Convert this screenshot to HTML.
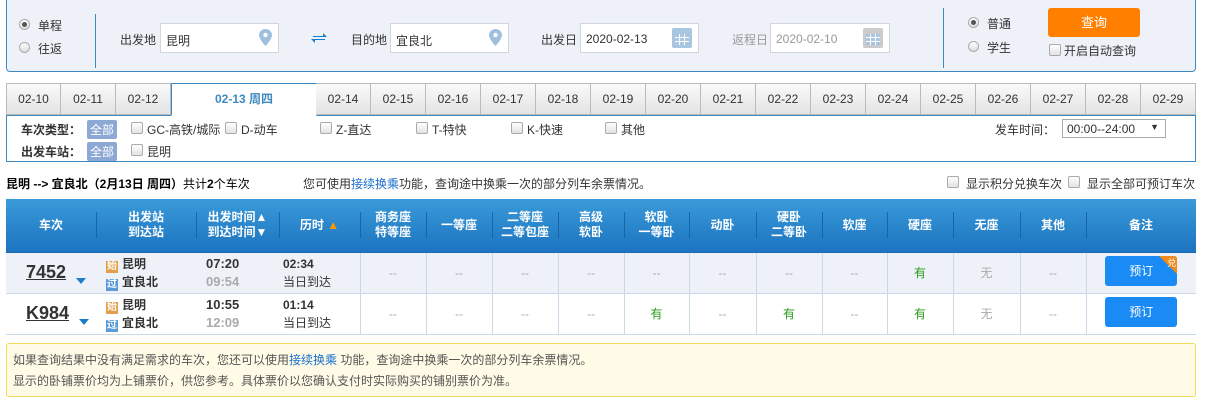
<!DOCTYPE html><html><head><meta charset="utf-8"><style>
*{box-sizing:border-box;margin:0;padding:0}
body{width:1206px;height:403px;overflow:hidden;background:#fff;font-family:"Liberation Sans","Noto Sans CJK SC",sans-serif;font-size:12px;color:#333;position:relative}
.a{position:absolute;white-space:nowrap}
.top{position:absolute;left:6px;top:-6px;width:1190px;height:78px;background:#eef1f8;border:1px solid #3e8ac0;border-radius:4px}
.radio{position:absolute;width:11px;height:11px;border-radius:50%;border:1px solid #aaa;background:linear-gradient(#fff,#ddd)}
.radio.on::after{content:"";position:absolute;left:2px;top:2px;width:5px;height:5px;border-radius:50%;background:#555}
.inp{position:absolute;height:30px;background:#fff;border:1px solid #cfd6e0;font-size:12px;padding:8px 0 0 5px}
.pin{position:absolute;right:6px;top:5px;width:13px;height:17px}
.cal{position:absolute;right:6px;top:4px;width:20px;height:20px;background:#a9c6e0;border-radius:2px}
.cal::after{content:"";position:absolute;left:3px;top:6px;width:14px;height:11px;background:repeating-linear-gradient(90deg,transparent 0 4px,#fff 4px 5px),repeating-linear-gradient(0deg,#a9c6e0 0 3px,#fff 3px 4px)}
.cb{position:absolute;width:12px;height:12px;border:1px solid #aaa;border-radius:2px;background:linear-gradient(#fff,#e2e2e2)}
.tabs{position:absolute;left:6px;top:83px;width:1190px;height:33px;border-bottom:1px solid #3e8ac0}
.tab{position:absolute;top:0;width:55px;height:32px;border:1px solid #bbb;border-left:none;background:linear-gradient(#fafafa,#e3e3e3);text-align:center;line-height:31px;font-size:12px;color:#333}
.tab.sel{background:#fff;border:1px solid #3e8ac0;border-bottom:1px solid #fff;height:33px;color:#3e8ac0;font-weight:bold}
.filter{position:absolute;left:6px;top:115px;width:1190px;height:47px;border:1px solid #3e8ac0;border-top:none}
.badge{position:absolute;background:#8ea8d5;color:#fff;padding:1px 3px;font-size:12px;border-radius:2px}
b{font-weight:bold}
table{position:absolute;left:6px;top:199px;width:1190px;border-collapse:collapse;table-layout:fixed}
th{height:53px;background:linear-gradient(#3a9ad9,#1c74c0);color:#fff;font-size:12px;font-weight:bold;line-height:15px;border-bottom:1px solid #1a6bb0;position:relative}
th+th::before{content:"";position:absolute;left:0;top:13px;height:26px;border-left:1px solid #1965a8}
td{text-align:center;border-right:1px solid #c9d9e6;color:#aaa;font-size:12px;height:41px;border-bottom:1px solid #c9d9e6}
td.n{border-right:none}
tr.r1 td{background:#eef1f8}
.g{color:#2a9a1a}
.num{font-size:18px;font-weight:bold;color:#333;text-decoration:underline}
.tri{display:inline-block;border-left:5px solid transparent;border-right:5px solid transparent;border-top:6px solid #1a7ed0;margin-left:10px;vertical-align:-6px}
.ic{display:inline-block;width:12px;height:12px;color:#fff;font-size:10px;line-height:12px;text-align:center;margin-right:4px;vertical-align:-1px}
.btn{display:inline-block;width:72px;height:30px;background:#1a8af5;color:#fff;border-radius:3px;line-height:30px;position:relative;overflow:hidden}
.note{position:absolute;left:6px;top:343px;width:1190px;height:54px;background:#fffbe6;border:1px solid #f0dc5a;border-radius:3px;padding:6px 0 0 6px;line-height:21px;color:#555}
a{color:#1a6fcd;text-decoration:none}
</style></head><body>
<div class="top"></div>
<div class="radio on" style="left:19px;top:19px"></div><div class="a" style="left:38px;top:17px">单程</div>
<div class="radio" style="left:19px;top:42px"></div><div class="a" style="left:38px;top:40px">往返</div>
<div class="a" style="left:95px;top:14px;height:54px;border-left:1px solid #3e8ac0"></div>
<div class="a" style="left:120px;top:31px">出发地</div>
<div class="inp" style="left:160px;top:23px;width:119px">昆明<svg class="pin" viewBox="0 0 13 17"><path d="M6.5 0C3 0 0 2.7 0 6.2 0 10 6.5 17 6.5 17S13 10 13 6.2C13 2.7 10 0 6.5 0z" fill="#9ec0de"/><circle cx="6.5" cy="6" r="2.2" fill="#fff"/></svg></div>
<svg class="a" style="left:311px;top:31px" width="16" height="14" viewBox="0 0 16 14"><path d="M2 5h10V2l4 4H2zM14 9H4v3L0 8h14z" fill="#1a7ed0"/></svg>
<div class="a" style="left:351px;top:31px">目的地</div>
<div class="inp" style="left:390px;top:23px;width:119px">宜良北<svg class="pin" viewBox="0 0 13 17"><path d="M6.5 0C3 0 0 2.7 0 6.2 0 10 6.5 17 6.5 17S13 10 13 6.2C13 2.7 10 0 6.5 0z" fill="#9ec0de"/><circle cx="6.5" cy="6" r="2.2" fill="#fff"/></svg></div>
<div class="a" style="left:541px;top:31px">出发日</div>
<div class="inp" style="left:580px;top:23px;width:119px">2020-02-13<div class="cal"></div></div>
<div class="a" style="left:732px;top:31px;color:#999">返程日</div>
<div class="inp" style="left:770px;top:23px;width:120px;color:#999">2020-02-10<div class="cal" style="background:#ccc"></div></div>
<div class="a" style="left:943px;top:8px;height:60px;border-left:1px solid #3e8ac0"></div>
<div class="radio on" style="left:968px;top:17px"></div><div class="a" style="left:987px;top:15px">普通</div>
<div class="radio" style="left:968px;top:41px"></div><div class="a" style="left:987px;top:39px">学生</div>
<div class="a" style="left:1048px;top:8px;width:92px;height:29px;background:#ff8000;border-radius:3px;color:#fff;text-align:center;line-height:29px;font-size:13px">查询</div>
<div class="cb" style="left:1049px;top:44px"></div><div class="a" style="left:1064px;top:42px">开启自动查询</div>

<div class="tabs">
<div class="tab" style="left:0;border-left:1px solid #bbb">02-10</div>
<div class="tab" style="left:55px">02-11</div>
<div class="tab" style="left:110px">02-12</div>
<div class="tab sel" style="left:165px;width:146px">02-13 周四</div>
<div class="tab" style="left:310px">02-14</div><div class="tab" style="left:365px">02-15</div><div class="tab" style="left:420px">02-16</div><div class="tab" style="left:475px">02-17</div><div class="tab" style="left:530px">02-18</div><div class="tab" style="left:585px">02-19</div><div class="tab" style="left:640px">02-20</div><div class="tab" style="left:695px">02-21</div><div class="tab" style="left:750px">02-22</div><div class="tab" style="left:805px">02-23</div><div class="tab" style="left:860px">02-24</div><div class="tab" style="left:915px">02-25</div><div class="tab" style="left:970px">02-26</div><div class="tab" style="left:1025px">02-27</div><div class="tab" style="left:1080px">02-28</div><div class="tab" style="left:1135px;width:55px">02-29</div>
</div>
<div class="filter"></div>
<div class="a" style="left:21px;top:121px;font-weight:bold">车次类型：</div>
<div class="badge" style="left:87px;top:120px">全部</div>
<div class="cb" style="left:131px;top:122px"></div><div class="a" style="left:147px;top:121px">GC-高铁/城际</div>
<div class="cb" style="left:225px;top:122px"></div><div class="a" style="left:241px;top:121px">D-动车</div>
<div class="cb" style="left:320px;top:122px"></div><div class="a" style="left:336px;top:121px">Z-直达</div>
<div class="cb" style="left:416px;top:122px"></div><div class="a" style="left:432px;top:121px">T-特快</div>
<div class="cb" style="left:511px;top:122px"></div><div class="a" style="left:527px;top:121px">K-快速</div>
<div class="cb" style="left:605px;top:122px"></div><div class="a" style="left:621px;top:121px">其他</div>
<div class="a" style="left:995px;top:121px">发车时间：</div>
<div class="a" style="left:1062px;top:119px;width:104px;height:19px;border:1px solid #aaa;background:#fff;padding:2px 4px;font-size:12px">00:00--24:00<span style="position:absolute;right:6px;top:2px;font-size:9px">▼</span></div>
<div class="a" style="left:21px;top:143px;font-weight:bold">出发车站：</div>
<div class="badge" style="left:87px;top:142px">全部</div>
<div class="cb" style="left:131px;top:144px"></div><div class="a" style="left:147px;top:143px">昆明</div>

<div class="a" style="left:6px;top:175px;color:#000"><b>昆明 --&gt; 宜良北（2月13日 周四）</b>共计<b>2</b>个车次</div>
<div class="a" style="left:303px;top:175px">您可使用<a>接续换乘</a>功能，查询途中换乘一次的部分列车余票情况。</div>
<div class="cb" style="left:947px;top:176px"></div><div class="a" style="left:966px;top:175px">显示积分兑换车次</div>
<div class="cb" style="left:1068px;top:176px"></div><div class="a" style="left:1087px;top:175px">显示全部可预订车次</div>

<table>
<colgroup><col style="width:90px"><col style="width:100px"><col style="width:83px"><col style="width:81px"><col style="width:66px"><col style="width:66px"><col style="width:66px"><col style="width:66px"><col style="width:65px"><col style="width:67px"><col style="width:66px"><col style="width:65px"><col style="width:66px"><col style="width:67px"><col style="width:66px"><col></colgroup>
<tr><th>车次</th><th>出发站<br>到达站</th><th>出发时间▲<br>到达时间▼</th><th>历时 <span style="color:#f90">▲</span></th><th>商务座<br>特等座</th><th>一等座</th><th>二等座<br>二等包座</th><th>高级<br>软卧</th><th>软卧<br>一等卧</th><th>动卧</th><th>硬卧<br>二等卧</th><th>软座</th><th>硬座</th><th>无座</th><th>其他</th><th>备注</th></tr>
<tr class="r1"><td class="n" style="text-align:left;padding-left:20px"><span class="num">7452</span><span class="tri"></span></td>
<td class="n" style="text-align:left;padding-left:10px;color:#333;font-weight:bold;line-height:18px"><span class="ic" style="background:#e0a04a">始</span>昆明<br><span class="ic" style="background:#5b9bd8">过</span>宜良北</td>
<td class="n" style="text-align:left;padding-left:10px;line-height:18px"><b style="color:#333;font-size:13px">07:20</b><br><b style="color:#aaa;font-size:13px">09:54</b></td>
<td style="text-align:left;padding-left:4px;line-height:18px;color:#333"><b>02:34</b><br>当日到达</td>
<td>--</td><td>--</td><td>--</td><td>--</td><td>--</td><td>--</td><td>--</td><td>--</td><td class="g">有</td><td>无</td><td>--</td>
<td style="border-right:none"><span class="btn">预订<span style="position:absolute;right:0;top:0;border-top:18px solid #f08a1a;border-left:18px solid transparent"></span><span style="position:absolute;right:1px;top:-8px;font-size:9px;color:#fff">兑</span></span></td></tr>
<tr><td class="n" style="text-align:left;padding-left:20px"><span class="num">K984</span><span class="tri"></span></td>
<td class="n" style="text-align:left;padding-left:10px;color:#333;font-weight:bold;line-height:18px"><span class="ic" style="background:#e0a04a">始</span>昆明<br><span class="ic" style="background:#5b9bd8">过</span>宜良北</td>
<td class="n" style="text-align:left;padding-left:10px;line-height:18px"><b style="color:#333;font-size:13px">10:55</b><br><b style="color:#aaa;font-size:13px">12:09</b></td>
<td style="text-align:left;padding-left:4px;line-height:18px;color:#333"><b>01:14</b><br>当日到达</td>
<td>--</td><td>--</td><td>--</td><td>--</td><td class="g">有</td><td>--</td><td class="g">有</td><td>--</td><td class="g">有</td><td>无</td><td>--</td>
<td style="border-right:none"><span class="btn">预订</span></td></tr>
</table>
<div class="note">如果查询结果中没有满足需求的车次，您还可以使用<a>接续换乘</a> 功能，查询途中换乘一次的部分列车余票情况。<br>显示的卧铺票价均为上铺票价，供您参考。具体票价以您确认支付时实际购买的铺别票价为准。</div>
</body></html>
